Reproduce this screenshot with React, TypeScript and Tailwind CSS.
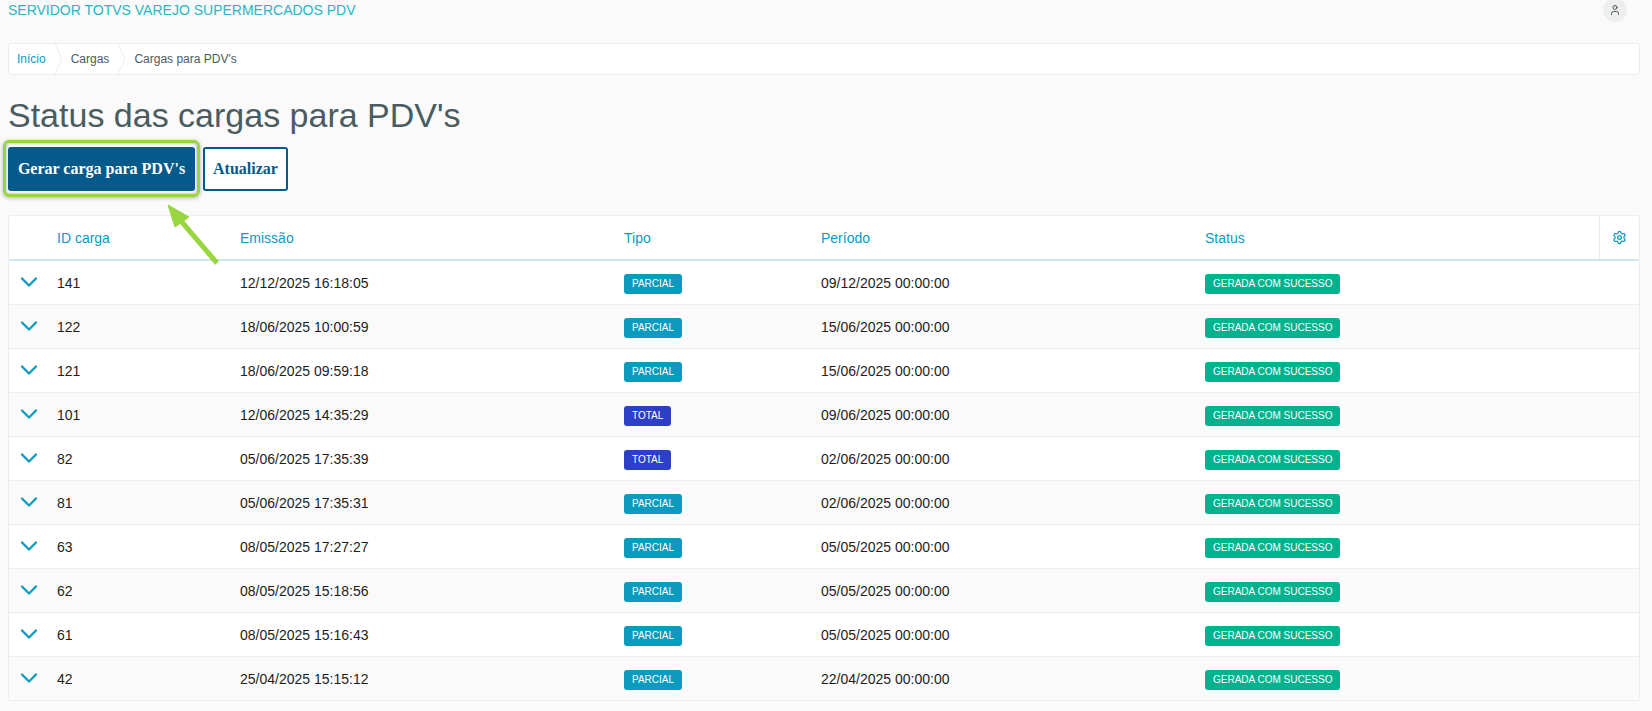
import { ChevronDown, Settings, User } from "lucide-react";

const rows = [
  { id: "141", emissao: "12/12/2025 16:18:05", tipo: "PARCIAL", periodo: "09/12/2025 00:00:00" },
  { id: "122", emissao: "18/06/2025 10:00:59", tipo: "PARCIAL", periodo: "15/06/2025 00:00:00" },
  { id: "121", emissao: "18/06/2025 09:59:18", tipo: "PARCIAL", periodo: "15/06/2025 00:00:00" },
  { id: "101", emissao: "12/06/2025 14:35:29", tipo: "TOTAL", periodo: "09/06/2025 00:00:00" },
  { id: "82", emissao: "05/06/2025 17:35:39", tipo: "TOTAL", periodo: "02/06/2025 00:00:00" },
  { id: "81", emissao: "05/06/2025 17:35:31", tipo: "PARCIAL", periodo: "02/06/2025 00:00:00" },
  { id: "63", emissao: "08/05/2025 17:27:27", tipo: "PARCIAL", periodo: "05/05/2025 00:00:00" },
  { id: "62", emissao: "08/05/2025 15:18:56", tipo: "PARCIAL", periodo: "05/05/2025 00:00:00" },
  { id: "61", emissao: "08/05/2025 15:16:43", tipo: "PARCIAL", periodo: "05/05/2025 00:00:00" },
  { id: "42", emissao: "25/04/2025 15:15:12", tipo: "PARCIAL", periodo: "22/04/2025 00:00:00" },
];

function Tag({ label, color }: { label: string; color: string }) {
  return (
    <span className={`inline-flex h-5 items-center whitespace-nowrap rounded-[3px] px-2 text-[10px] leading-none text-white ${color}`}>
      {label}
    </span>
  );
}

function Crumb({ label, link }: { label: string; link?: boolean }) {
  return (
    <div className="flex h-full items-center">
      <span className={link ? "text-[#0c9abe]" : "text-[#4a5c60]"}>{label}</span>
      <svg width="10" height="30" viewBox="0 0 10 30" fill="none" className="ml-[8px] mr-[7px]">
        <path d="M1 0 L8 15 L1 30" stroke="#eceeee" strokeWidth="1" />
      </svg>
    </div>
  );
}

export default function App() {
  return (
    <div className="relative h-[711px] overflow-hidden bg-[#fafafa] pl-2 pr-3 font-['Liberation_Sans',Arial,sans-serif] text-sm text-[#1d1d1d]">
      <header className="flex h-[43px] items-start justify-between">
        <span className="text-sm leading-[21px] text-[#29b6c5]">SERVIDOR TOTVS VAREJO SUPERMERCADOS PDV</span>
        <div className="mr-[13px] -mt-[2px] flex h-6 w-6 items-center justify-center rounded-full bg-[#eeeeee] text-[#4a5c60]">
          <User size={12} strokeWidth={2} />
        </div>
      </header>

      <nav className="flex h-[32px] items-center rounded-[3px] border border-[#eceeee] bg-white pl-2 text-xs">
        <Crumb label="Início" link />
        <Crumb label="Cargas" />
        <span className="text-[#4a5c60]">Cargas para PDV's</span>
      </nav>

      <h1 className="mt-[20px] h-[52px] text-[34px] leading-[40px] font-normal text-[#4a5c60]">Status das cargas para PDV's</h1>

      <div className="flex h-[44px] gap-2 font-['Liberation_Serif',serif] text-base font-bold">
        <div className="relative">
          <button className="h-[44px] w-[187px] rounded-[3px] bg-[#055a8c] text-white">Gerar carga para PDV's</button>
          <div className="pointer-events-none absolute -top-[7px] -right-[5px] -bottom-[6px] -left-[5px] rounded-[6px] border-[3px] border-[#98d53f] shadow-[0_1px_4px_rgba(0,0,0,0.3),inset_0_0_3px_rgba(0,0,0,0.35)]" />
        </div>
        <button className="h-[44px] w-[85px] rounded-[3px] border-2 border-[#055a8c] bg-white text-[#055a8c]">Atualizar</button>
      </div>

      <div className="mt-[24px] overflow-hidden rounded-[3px] border border-[#eceeee] bg-white">
        <div className="grid h-[45px] grid-cols-[48px_183px_384px_197px_384px_1fr_40px] items-center border-b-2 border-[#cfe8f0] text-[#0c9abe]">
          <span />
          <span>ID carga</span>
          <span>Emissão</span>
          <span>Tipo</span>
          <span>Período</span>
          <span>Status</span>
          <span className="flex h-full items-center justify-center border-l border-[#e6eaeb]">
            <Settings size={15} strokeWidth={2} />
          </span>
        </div>
        {rows.map((r, i) => (
          <div
            key={r.id}
            className={`grid h-11 grid-cols-[48px_183px_384px_197px_384px_1fr] items-center border-b border-[#eceeee] last:h-[43px] last:border-b-0 ${i % 2 ? "bg-[#fafafa]" : "bg-white"}`}
          >
            <span className="-mt-[2px] flex pl-[6px] text-[#0c9abe]">
              <ChevronDown size={28} strokeWidth={2} />
            </span>
            <span>{r.id}</span>
            <span>{r.emissao}</span>
            <span className="mt-[3px] flex">
              <Tag label={r.tipo} color={r.tipo === "TOTAL" ? "bg-[#2e3fc7]" : "bg-[#0c9abe]"} />
            </span>
            <span>{r.periodo}</span>
            <span className="mt-[3px] flex">
              <Tag label="GERADA COM SUCESSO" color="bg-[#00b28e]" />
            </span>
          </div>
        ))}
      </div>

      {/* seta de destaque sobre a tabela */}
      <svg className="pointer-events-none absolute left-[160px] top-[198px]" width="70" height="72" viewBox="0 0 70 72" fill="none">
        <path d="M8 7 L29 19 L15 29 Z" fill="#98d53f" stroke="#98d53f" strokeWidth="1" strokeLinejoin="round" />
        <path d="M21 23 L57 65" stroke="#98d53f" strokeWidth="5" />
      </svg>
    </div>
  );
}
